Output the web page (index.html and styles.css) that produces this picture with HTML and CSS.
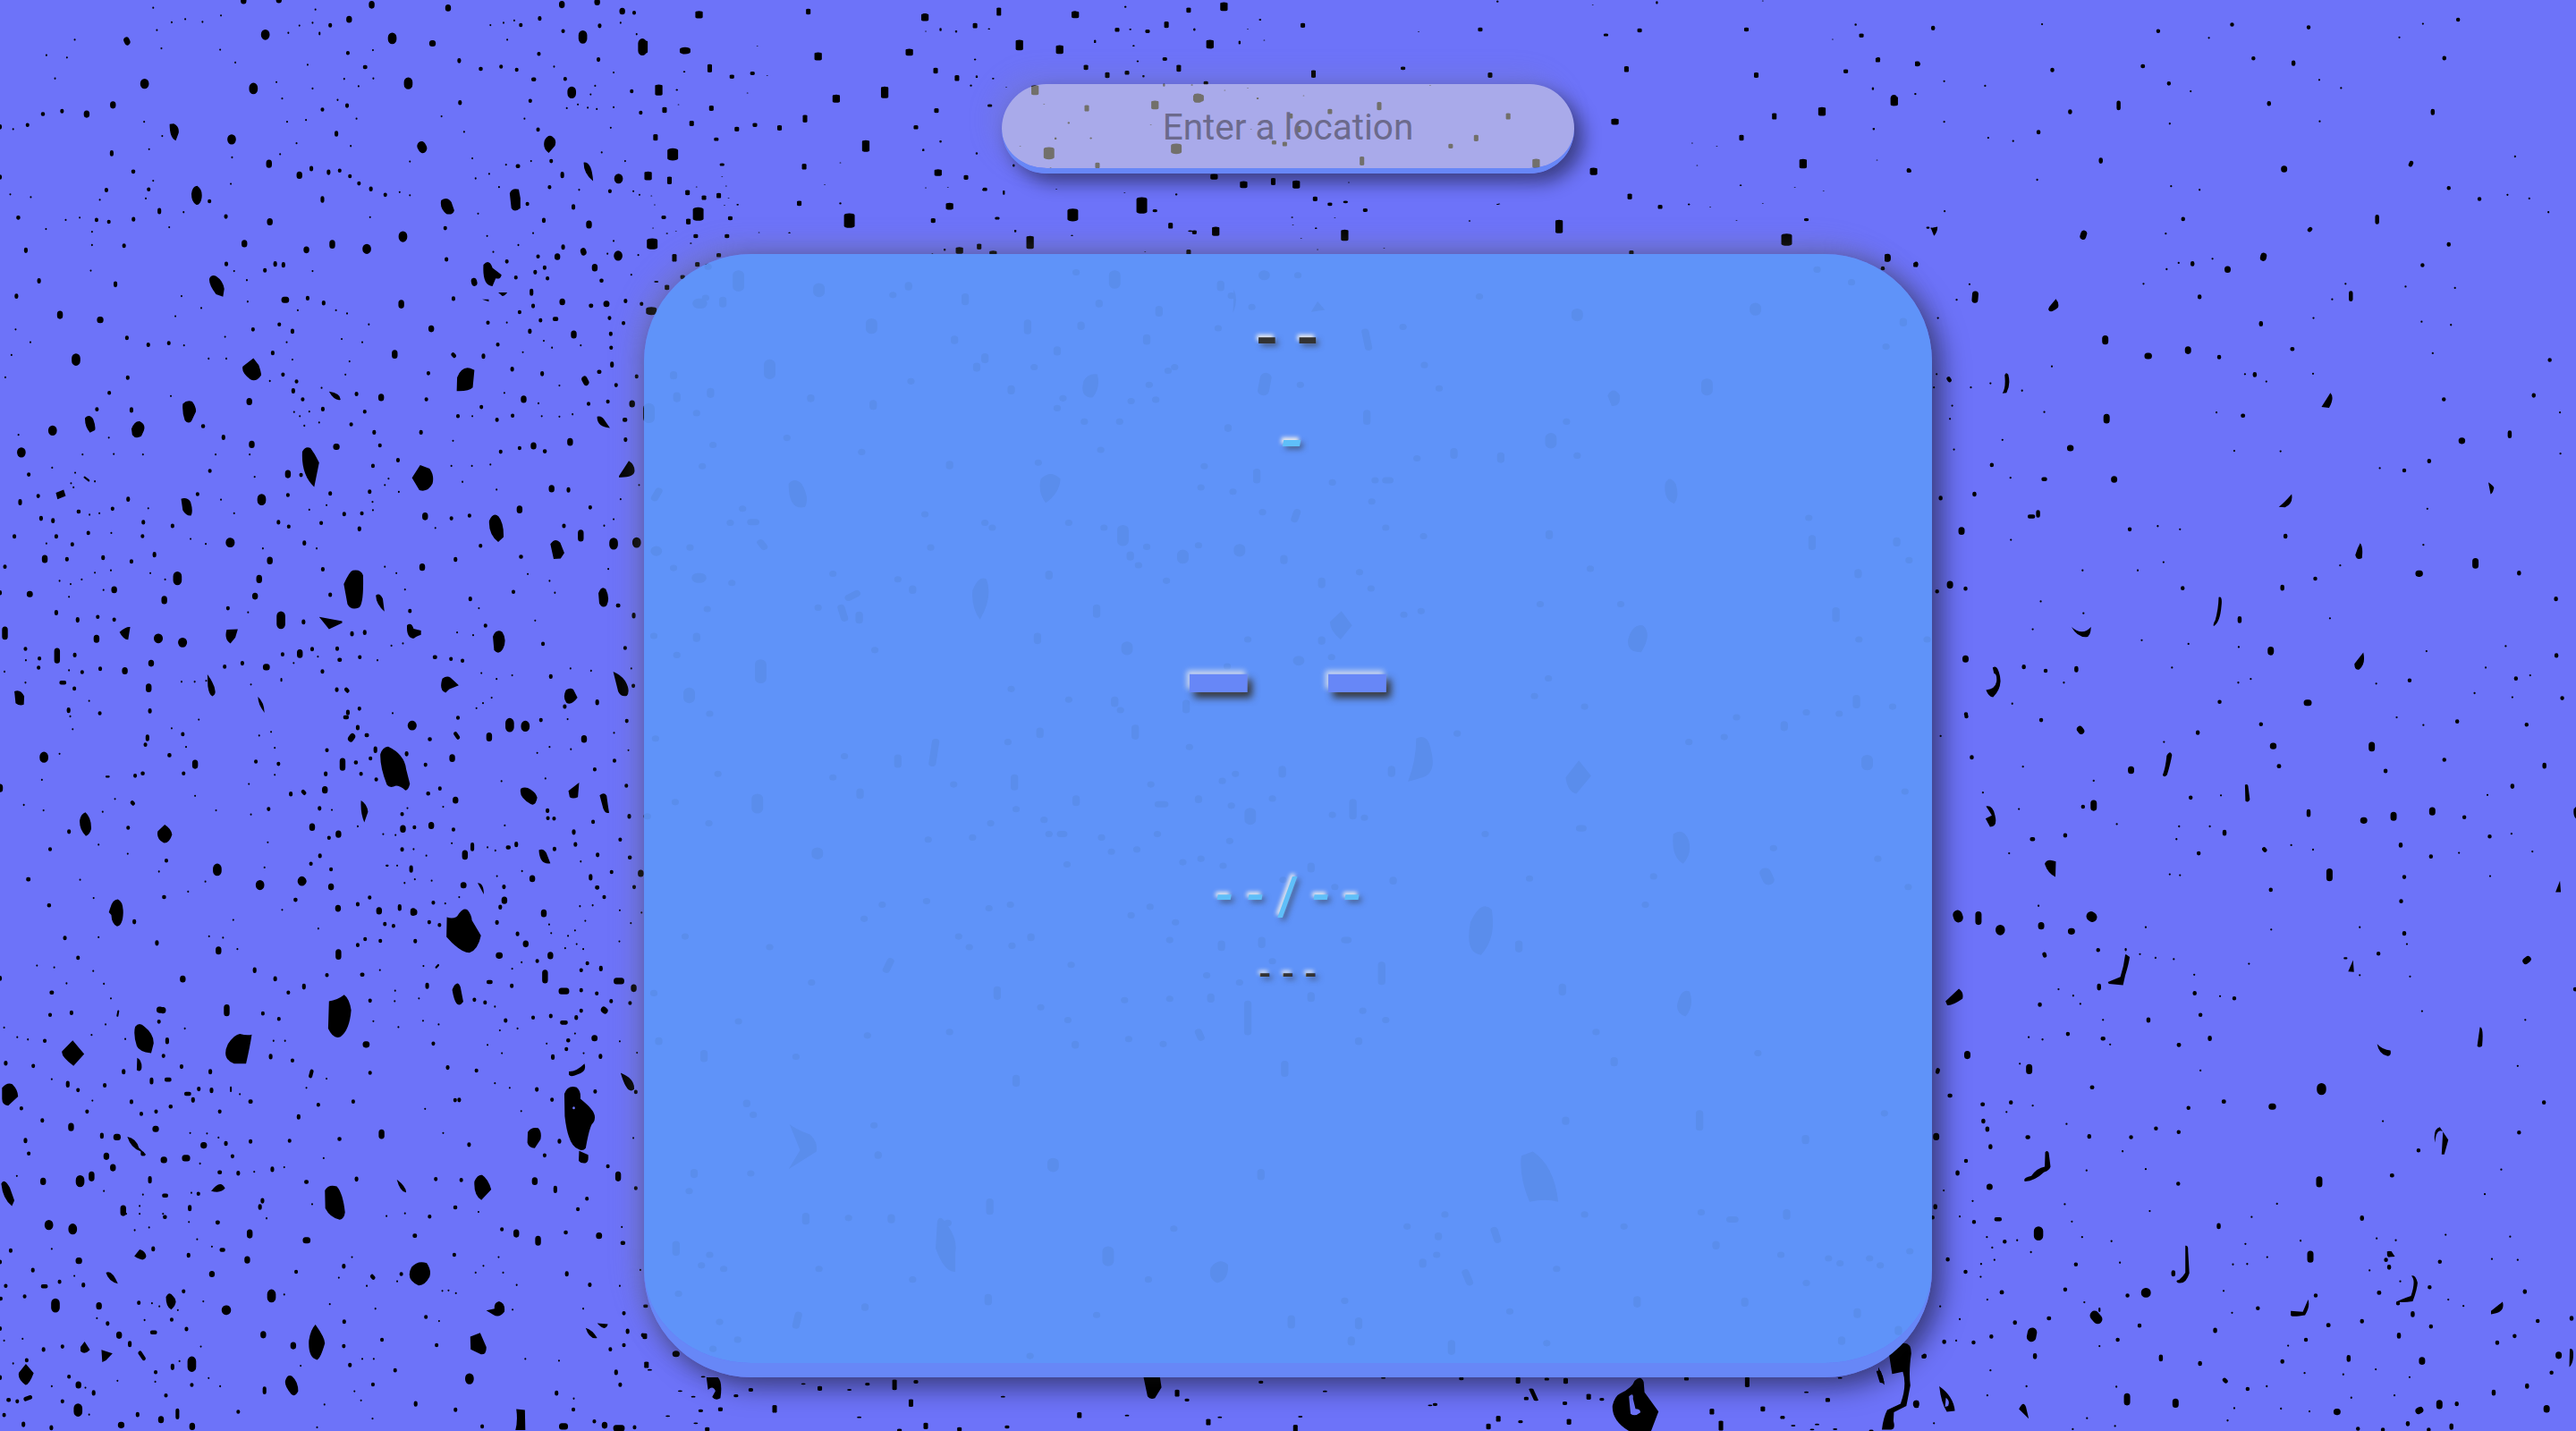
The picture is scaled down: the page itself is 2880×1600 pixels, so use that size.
FILE: index.html
```html
<!DOCTYPE html>
<html lang="en">
<head>
<meta charset="utf-8">
<title>Weather</title>
<link rel="stylesheet" href="styles.css">
</head>
<body>
<svg class="speckle" viewBox="0 0 2880 1600" aria-hidden="true">
<!-- upper left -->
<g transform="scale(.4592 .5102)">
<path class="s1" d="M182 87h0M113 121h0M163 126h0M134 172h0M32 283h0M451 42h0M418 49h0M373 17h0M382 66h0M393 106h0M536 109h0M573 137h0M493 48h0M538 34h0M768 21h0M761 50h0M729 56h0M702 72h0M778 72v3M749 142h0M673 180h0M761 194h0M687 216h0M838 173h0M873 189h0M908 110h0M909 172h0M822 219h0M745 263h0M699 267h0M868 260h0M722 314h0M854 320h0M682 338h0M562 403h0M565 345h0M351 267h0M395 298h0M363 327h0M373 396h0M355 435h0M243 438h0M194 477h0M160 482h0M25 426h0M75 432h0M224 508h0M224 537h0M221 593h0M412 498h0M447 465h0M603 661h0M548 738h0M601 614h0M570 594h0M761 594h0M725 680h0M818 680h0M845 687h0M490 675h0M427 693h0M442 649h0M898 711h0M832 743h0M882 750h0M698 750h0M448 757h0M508 786h0M551 786h0M712 788h0M657 835h0M841 821h0M851 792h0M998 354h0M1075 255h0M998 428h0M973 421h0M901 476h0M1150 347h0M1130 289h0M1194 55h0M1226 50h0M1252 45h0M1235 87h0M1277 260h0M1293 353h0M1232 361h0M1191 381h0M1158 391h0M1215 410h0M1164 468h0M1186 517h0M1201 552h0M1262 537h0M1298 511h0M1349 146h0M1438 207h0M1449 188h0M1407 229h0M1380 237h0M1431 236h0M1453 239h0M1494 159h0M1511 50h0M1550 75h0M1494 235h0M1487 280h0M1465 334h0M1522 353h0M1410 416h0M1542 419h0M1557 427h0M1494 528h0M1479 556h0M1554 559h0M1537 602h0M1234 707h0M1324 747h0M1344 762h0M1414 757h0M1273 772h0M1228 861h0M1362 845h0M1311 884h0M1319 912h0M1362 913h0M1394 908h0M1150 912h0M1103 966h0M1099 1021h0M1149 1021h0M1194 1018h0M1209 1073h0M1126 1056h0M971 1078h0M946 1049h0M937 1063h0M907 1100h0M908 1118h0M1060 1157h0M937 1242h0M965 1256h0M986 1292h0M1166 1333h0M1285 1258h0M1338 1273h0M1351 1299h0M1303 1360h0M1481 1247h0M1471 1152h0M1494 1138h0M1511 1094h0M1556 1063h0M777 926h0M741 933h0M753 902h0M608 996h0M620 1045h0M538 1095h0M570 1125h0M753 1117h0M795 1107h0M771 1202h0M640 1202h0M501 1192h0M464 1181h0M525 996h0M348 996h0M277 995h0M201 996h0M265 959h0M127 1025h0M183 1036h0M206 1046l10 7M231 1055h0M173 1059h0M179 1068h0M242 1125h0M218 1128h0M361 1114h0M271 1168h0M172 1280h0M145 1273h0M199 1270h0M231 1255h0M270 1250h0M252 1293h0M168 1308h0M366 1256h0M402 1270h0M604 1342h0M113 1191h0M28 778h0M74 750h0M38 722h0M45 953h0M13 827h0M416 868h0M783 850h0M716 903h0M730 912h0M112 502h0M63 1447h0M11 1472h0M62 1496h0M168 1469h0M217 1536h0M442 1494h0M474 1494h0M502 1492h0M611 1500h0M685 1488v4M774 1439h0M715 1453h0M919 1447h0M953 1415h0M981 1410h0M1113 1386h0M1152 1392h0M1172 1475h0M1197 1529h0M1209 1488h0M1247 1480h0M1389 1465h0M1439 1470h0M1537 1465h0M1160 1552h0M956 1563h0M1176 1541h0"/>
<path class="s2" d="M67 274h0M104 250h1M151 243v1M0 277v2M0 387v2M272 334v4M324 376h1M259 416v1M362 415h0M388 460v5M325 480v1M265 486h0M235 482h0M44 477h1M302 538v1M63 547v3M95 614v3M40 648v2M281 621v4M309 740v1M361 755v1M411 752h0M311 827v1M266 861h0M236 897h0M320 897v3M494 934h1M544 957v3M511 1032v0M481 1083h0M312 1093v2M274 1115h0M349 1144v1M347 1175h0M420 1152v1M215 1168h0M191 1121h1M100 1135v2M129 1140v2M137 1175v1M176 1193h0M35 1175v1M70 1040h0M93 1087h0M49 1098v5M163 1225v1M251 1221v2M320 1230v1M376 1214v3M12 1242v0M0 1298v2M137 1341v3M189 1357v3M238 1352h0M278 1358h0M62 1422h0M182 1435v1M96 1443h0M94 1463h0M149 1496h8M181 1509h0M200 1473h0M244 1465v1M243 1563h0M365 1557v2M167 1555v3M547 1461h0M590 1453v1M555 1333h0M688 1434h0M739 1362v2M760 1422v1M821 1421v1M876 1440h0M826 1446h2M785 1471v1M820 1511v1M843 1511l3 3M875 1553v0M847 1560v3M857 1388v2M888 1385v2M786 1247v1M804 1303v1M741 1189v2M678 1144v1M703 1154v0M701 1085h0M733 1041h0M804 1081v1M838 1126v1M875 1158v2M881 1125h0M782 1146h0M900 1077v1M908 1021h0M969 1008v1M925 976h0M911 947v1M855 930h0M888 902h0M868 863v1M786 896v1M737 875h0M714 855v3M722 836h0M689 821h0M664 773v1M712 725v2M680 711h0M616 722h0M788 663v2M749 653v1M645 592v1M690 579v3M670 577v3M551 578v1M550 474v1M510 441h0M785 434v6M903 413v2M938 427h0M874 402h0M852 386v0M827 374v0M800 376v3M758 368v3M785 240h0M845 231v1M819 291v4M804 55v1M847 116v0M888 147h2M1118 132v2M1120 224v2M1170 151h1M1220 146h0M1258 153h0M1298 174h3M1291 221h0M1268 55h0M1314 40v1M1371 68h0M1312 118h0M1376 173h0M1457 130v1M1460 56v1M1544 28h0M1538 200h0M1560 247h0M1310 284h0M1342 353h0M1338 410h0M1284 447h0M1260 364h2M1369 381v5M1485 419v0M1396 452v3M1324 482v2M1371 540v3M1310 562h0M1326 586v1M1303 596v1M1333 610h0M1256 608h0M1234 573h0M1087 568v1M1084 500h0M1104 654v1M1188 707h0M1177 779v3M1103 777l3 3M1212 755h0M1290 725v2M1265 684h0M1298 670v1M1294 637v7M1316 702h0M1350 699h5M1464 615h1M1438 670h2M1523 659v1M1562 666h0M1518 708v0M1484 697h0M1487 731v1M1488 762h0M1490 797v4M1458 815h2M1320 818v2M1247 808v2M1172 892h0M1248 911h0M1210 920h0M1115 912h0M1038 875h0M1043 818h0M1025 947v1M1219 990h0M1265 982h0M1326 989h1M1384 1072v3M1373 1152v1M1480 880v0M1433 885h0M1550 825h0M1523 963v1M1500 844h0M1520 920h3M1504 1327h2M1543 1347v4M1522 1420h0M1542 1503h0M1322 1411h0M1250 1297h0M1268 1220h1M1170 1196h0M1109 1225v2M1145 1312v1M1182 1371h0M1058 1440h2M1098 1444h0M1126 1448h0M1143 1130h0M1099 1136h0M998 1339h0M1375 1548v1M1454 1537v4M1341 1482v1M1437 1112h0"/>
<path class="s3" d="M593 0v2M679 0h0M905 9v3M850 42v1M1091 17v1M1515 24v1M1454 4v1M1368 9v2M1052 95h2M308 88l2 4M275 229v2M211 249v2M655 357v4M729 383v2M657 485v2M595 533v2M746 547v1M809 533v5M961 774v5M977 664v5M1050 720v1M1154 616l1 4M1434 490v4M1420 550l1 3M1448 585v3M1357 562v1M1369 661v1M1476 666h1M1397 731v4M1423 831l4 7M1275 874v2M1539 884v2M1388 967v3M1299 976v2M1343 1070v2M1265 1115v3M1035 1130v3M1028 1242v2M928 870v2M818 979h2M613 973v2M607 879v2M701 1037v4M657 1227v3M631 1267v4M621 1306v1M278 1292v1M400 1313v4M368 1453v1M72 1302h1M109 1223v4M139 1427v20M146 688v4M243 701h2M692 657h5M1414 1168v12M647 1462h3M730 1430v5M362 1505v5M235 1398v4M12 1380v15M304 1469v2"/>
<path class="s4" d="M646 75v2M352 183v1M617 192v4M955 82v4M994 180v5M1419 77v8M1564 95v16M1392 200v5M1026 320l3 5M1506 391v1M185 785v6M564 305v1M893 545v1M981 517v3M1505 560v1M128 943v1M52 991v1M432 1263v9M385 1399h1M444 1408h1M560 1189h1M684 1350v18M637 1093v4M1550 1188v2M1494 1189v5"/>
<path d="M413 272l10-1q14 6 12 20l-7 17q-15-5-15-36M466 425q2-17 14-18 14 8 11 27-3 15-13 15-12-6-12-24M510 610q5-9 16-5 17 10 20 28l-3 17-17-5q-19-22-16-35M591 803l26-18 13 15q6 16 6 22-13 17-27 9-22-15-18-28M445 885q10-9 23-5 10 12 9 22l-11 21q-8 7-16-2-7-17-5-36M207 916q11-10 20 3 7 17 4 24l-12 5q-13-14-12-32M320 940q7-18 20-17 16 7 10 21l-6 12q-14 7-22-3zM441 1093q15-4 23 7 7 21 1 30-12 1-20-12zM736 990q7-13 20-8l10 13 11 19-12 53q-32-27-29-77M837 1280q14-28 22-30 20-3 25 11 2 66-11 71-19 6-27-8zM915 1305q9-8 17 7l4 28q-20-15-21-35M777 1352l56 9v4l-32 14zM991 1370q11-7 16 8l18 4v9q-13 4-17 8-19 0-17-29M1074 439q15-9 25 4l7 18q-3 11-19 8-17-12-13-30M1241 424q5-13 22-9l4 19v22q-15 11-22 0zM1326 307q12-18 25-2 5 12-4 19l-11 11q-16-10-10-28M1177 580q14-14 22 7l22 15q-2 11-14 8l-8 17q-25-1-22-47M1113 827q11-25 32-20l10 4-4 38q-9 9-39 8zM1003 1047l20-28 23 8q12 15 7 33-12 20-32 14zM1191 1141q10-20 23-9 13 15 12 45l-13 11q-24-18-22-47M1200 1395q8-18 23-10 12 16 2 36-10 16-22 4zM1340 1192q12-15 24-3l10 23-9 12-17 1zM1457 1300q7-18 18-9 11 20 2 36-11 8-18-5zM1493 1472q19 7 29 20 14 22 4 33-15 3-21-10zM1077 1487q11-7 20-2l20 17-23 8-9 8q-17-5-8-31M1378 1512q10-6 18-1l10 18q-15 18-27 11-10-12-1-28M505 1478q18 22 19 37 1 7-7 11-8-3-11-22zM35 1515q15-6 24 11l-1 18q-10 4-20-3zM1454 913q11-3 19 9l12 16q-33-3-31-25M1507 1043l24-33q15 9 14 23-2 14-38 13M552 1380l27-1-6 18-12 13q-16-9-9-30M291 1385q15-12 26-11l-5 28q-12-1-21-17M801 858q29 4 28 18-15 3-28-18M1421 356q20-2 23 41-23-17-23-41M1174 656h16v5zM1213 641h22q-6 8-12 8zM136 1080l19-7 5 14-20 7zM628 1527q15 12 16 35-16-18-16-35"/>
</g>
<!-- lower left -->
<g transform="translate(0 800) scale(.4592 .5102)">
<path class="s1" d="M171 2h0M177 30h0M418 28h0M453 69h0M145 84h0M259 134h6M280 183h0M250 211h0M58 196h0M106 208h0M102 141h0M240 283h0M311 303h0M195 360h0M387 342h0M228 400h0M458 386h0M500 364h0M240 486h0M90 548h0M132 552h0M162 587h0M253 588h0M227 560h0M270 620h0M644 333h0M687 426h0M568 448h0M509 484h0M543 487h0M578 512h0M775 467h0M652 278h0M611 217h0M526 208h0M606 150h0M669 130h0M669 71h0M660 36h0M631 44h0M484 9h0M475 176h0M808 207h0M871 243h0M933 260h0M963 262h0M992 203h0M1079 200h0M1007 293h0M1038 307h0M941 329h3M967 329h0M985 367h0M1010 359h0M1051 362h0M1084 412h0M1118 398h0M1100 280h0M1187 289h0M1206 296h0M1229 241h0M1271 341h0M1210 352h0M1221 144h0M1308 82h0M1328 138h0M1338 69h0M1382 8h0M1390 74h0M1495 38h0M1530 76h0M1414 320h0M1412 418h0M1443 416h0M1509 427h0M1562 432h0M1536 455h0M1508 495h0M1400 471h0M1425 450h0M1383 483h0M1376 510h0M1404 501h0M1420 512h0M1342 477h0M1337 458h0M1270 541h0M1247 555h0M1062 552l5-5M1031 549h0M925 558h0M961 626h0M1020 620h0M962 603h0M1030 669h0M1068 677h0M909 670h0M970 683h0M1187 722h0M1217 690h0M1260 686h0M1205 638h0M1222 740h0M1331 719h0M1400 697h0M1421 740h0M1509 714h0M1551 739h0M1205 806h0M1269 867h0M1241 816h0M1035 862h0M1079 915h0M941 1097h0M986 1091h0M1165 1088h0M1177 1206h0M1158 1221h0M1225 1221h0M1214 1187h0M1258 1248h0M1248 1302h0M1110 1266h0M1092 1260h0M1077 1261h0M967 1240h0M914 1300h0M825 1232h0M857 1187h0M893 1250h0M692 1269h0M803 1290h0M732 1425h0M790 1510h0M879 1501h0M907 1541h0M882 1410h0M910 1410h0M863 1481h0M772 1560h0M1069 1327h0M1279 1410h0M1361 1414h0M1397 1497h0M1420 1300h0M1509 1250h0M1559 1215h0M1514 1121h0M1542 926h0M649 1102h0M760 1071h0M692 990h0M619 1000h0M788 970h0M795 796h0M746 816h0M666 713h0M694 713h0M562 815v8M584 830h0M463 915h0M504 916h0M532 925h0M487 982h0M466 1046h0M348 1050h0M340 1075h0M340 1092h0M397 1092h0M363 1122h0M328 1128h0M307 1092h0M253 1042h0M41 1009h0M126 797h0M42 705h0M10 684h0M68 710h0M223 700h0M257 677h0M305 709h0M288 648l-2 10M450 686h0M225 844h0M516 1164h0M480 1148h0M460 1110h0M495 1284h0M433 1303h0M489 1383h0M437 1415h0M536 1470h0M508 1452h0M378 1460h0M286 1458h0M208 1473h0M217 1532h0M126 1470h0M55 1366h0M32 1420h0M10 1370h0M181 1228h0M126 1169h0M236 1321h0M352 1325h0M388 1295h0M370 1288h0"/>
<path class="s2" d="M359 46v6M354 64h0M412 87h1M347 127h1M322 191l2 2M312 246h0M168 254v1M122 293h0M405 318h0M68 359h2M119 416h1M399 398h1M158 487v1M190 531h0M327 451v2M382 497v3M445 41h0M447 127h0M329 132h0M122 656h0M174 651v1M125 607h2M109 713h0M81 768h0M14 761v2M165 805v6M190 821h0M255 810v1M301 779v3M407 710v6M369 798v6M405 798h8M442 769v1M398 746h0M387 671h0M320 846v1M344 873h0M380 868h0M415 857h1M484 818v1M515 820v3M512 779v3M535 868h0M453 829h8M470 841v3M52 861h0M103 887v1M62 930v3M70 960h0M248 919v4M212 868h0M347 960v1M365 1014v7M405 1052h-6M483 1048h0M462 1077v5M401 1099h1M373 1168v2M459 1182v2M539 1171h5M529 1111h2M534 1001h2M580 1002v2M566 966h0M550 937v2M610 933v1M663 993v3M705 932h0M659 746v3M712 756v0M759 780l-3 10M775 853h0M727 878v3M609 846h2M640 653h0M679 665h0M620 556v4M670 576v2M702 607h0M740 592v4M796 569h0M881 568h2M901 625h0M871 503h0M889 490h0M926 494h0M937 457h0M958 461h0M900 399h0M871 413v1M806 337h0M779 307v1M757 325h0M801 268h0M719 404h1M708 171v2M738 167l3 3M654 205h0M678 106h0M623 101h0M778 203v1M793 127v2M796 76h0M866 103h1M879 128h0M871 25v3M840 4h5M892 43h2M902 94h0M914 72v6M916 140h0M990 83v2M1042 171h1M1071 160h0M1036 108h0M1046 52h1M1109 40l6 8M1115 5h0M1317 10h0M1526 12h0M1496 99h0M1448 118h0M1525 154h0M1532 220v2M1510 272h0M1444 233h0M1397 254v3M1401 282v1M1455 305v1M1533 311h1M1489 343h0M1350 292v1M1333 208v1M1349 226h0M1334 225h0M1471 398h0M1544 376h0M1438 352v5M1453 377h2M1257 281v3M1236 289h3M1150 283v10M1104 250h0M1009 245h0M979 293v1M979 216h0M1001 333v7M973 418v6M1011 494v1M1055 410h0M1045 453h0M1070 459h0M1040 590v5M1155 623h0M1181 629h0M1189 584h6M1246 592v1M1227 375v1M1218 419v2M1210 453v1M1260 478v1M1308 538h0M1430 543h0M1415 558h0M1463 553v3M1415 602h0M1488 626h0M1453 609h0M1534 630h0M1415 647h0M1403 661v2M1341 658v1M1298 662h0M1231 668v1M1368 673h10M1383 712h1M1379 731h0M1346 747v3M1462 746v2M1548 825h0M1449 824h0M1307 819v1M1344 842h0M1118 842v1M1108 843h0M1090 771v1M1160 778h0M1055 719h0M901 783h0M860 846h0M826 928h1M868 1015v2M745 1022h2M633 1075v4M639 1062v3M721 1219h0M906 1229l3 3M837 1206v2M977 1224h0M1106 1182h0M1009 1140h2M1046 1098h0M1061 1016h0M1108 1078h1M1123 1018h0M1142 940v1M1352 1035v7M1326 964h0M1362 932v2M1480 988h0M1429 1059h0M1407 1082h0M1222 1126h0M1377 1133h1M1548 1036h0M1515 1156h3M1380 1222v3M1436 1247v1M1519 1310h0M1528 1348v3M1519 1380h0M1486 1389h0M1565 1358h0M1500 1438v3M1510 1466v1M1355 1484v2M1396 1521h0M1109 1521v1M1012 1507v3M962 1435h0M930 1368h0M1037 1318h0M1063 1380h0M837 1382h0M838 1328v1M852 1423v1M908 1466h0M644 1475v8M580 1526h0M404 1490h0M379 1439h0M420 1425v5M454 1344v1M418 1324h0M370 1352h8M447 1262h0M338 1287h0M262 1332v1M316 1375v5M341 1397l9 12M203 1247v2M145 1241h0M80 1215v1M26 1172v1M14 1250h0M60 1273h0M104 1251h8M2 1278h0M0 1343v1M106 1389v1M152 1383v0M65 1413h0M168 1449h0M20 1500h2M42 1503h0M62 1498l12-4M152 1503h0M10 1533h0M57 1552v3M125 1560v2M0 1197v1M228 1483v3M335 1531v2M432 1523v15M467 1467h0M1447 1547h0M1545 1560h0M1174 1558h0M0 575v2M0 1450v2"/>
<path class="s3" d="M475 104v6M0 157v4M445 577v1M388 645h2M552 640v12M532 513v4M396 646h1M378 906h2M495 942h2M398 974h2M283 924h4M259 965v2M275 990v2M223 1006v8M105 1020v2M173 900v4M300 1080v10M191 1195h2M241 1293v2M290 1357v2M191 1466v2M392 1542v2M294 1555h2M468 1557v2M516 1224h0M608 1133v6M602 1192v2M641 1356v2M714 1380v2M744 1150h5M890 721h3M929 914v7M824 519v9M823 422v1M806 375v1M735 363h4M760 243v3M824 259v2M791 162v2M858 46l-4 5M834 100v14M923 427v2M1006 429v3M1007 431h2M981 247v3M1050 240v2M1132 302v7M1109 185v1M1101 92v3M1191 44v6M1422 50v3M1296 357v1M1228 404v2M1324 432v3M1214 526h3M1280 500v1M1340 525v2M1128 372h1M1447 707h1M1501 582h12M1367 604h12M1327 564v16M1543 596v3M1470 645l3 2M1505 1006v8M1302 1019v3M1257 1133v4M1310 1147v8M1458 1140h1M1420 968v3M1560 345v2M450 970h6M1472 1555v1M1368 1558h8M1500 1562h14"/>
<path class="s4" d="M107 90v3M529 335v6M633 371v1M735 363h0M1003 22h1M1241 16v10M1279 22v3M195 1018v5M119 1116v1M177 1124v3M135 1288v10M467 1415v13M661 1268v8M550 1303h2M190 1518v8M1143 1452v3"/>
<path d="M194 230q3-15 14-18 15 12 14 37-4 13-13 15-16-14-15-34M384 254l17-15q16 9 18 22-7 20-21 18-18-9-14-25M268 423q6-20 19-20 13 5 13 29-1 28-15 30-13-5-14-25l-6-6zM926 85q5-16 19-17 40 17 44 50l9 32q-4 14-11 14-13-10-23-10-15 6-22-2-17-39-16-67M1088 442q15 5 25-2 15-22 26-13 9 10 10 22l22 33q-7 31-28 38-22 0-56-35zM801 626q20-2 37-14 13 9 17 34-4 44-26 58-17 7-30-18zM555 720q16-21 29-22 19 4 29 1-4 25-14 64h-29q-32-11-15-43M151 736l26-24 28 30-26 26q-31-21-28-32M329 682q10-12 23 0 23 16 22 37l-6 21q-30-4-35-16-9-25-4-42M5 816q12-13 25-8 14 13 14 27l-24 20q-15-1-15-15M3 1026q7-14 21 9l11 28-6 12q-22-15-26-49M791 1041q9-15 29-9 15 15 20 57-2 15-13 16-24-5-35-25zM1002 1209q15-16 37-9 12 16 7 30-12 20-27 19-33-13-17-40M1155 1021q8-16 19-14 15 9 22 32l-24 23q-19-11-17-41M1285 913q8-12 25-9 10 8 6 25l-14 19q-15 0-18-12zM1374 829q8-20 30-14 11 8 9 25 20 15 25 21 17 17 6 32-8 4-18 55-7 8-18 2-25-7-33-72zM1410 954l22 9q2 16-7 18-11 1-16-5zM1268 160q12-5 24 2 13 7 16 18-4 20-16 14-30-15-24-34M1384 165l26-18-3 32q-12 5-20 0zM1460 175q11-8 17 1 3 21 6 37-12 4-17-18zM1312 295q11-5 18 6l10 23q-26 4-28-29M1184 1304l20-4q-2-13 11-16 16 4 13 23-13 15-27 6zM1145 1361l24-8 15 31q1 17-13 16l-25-11zM752 1370q4-24 16-35 23 29 23 41-11 34-19 36-22-4-20-42M46 1440l17-19 19 20q-11 26-20 26-20-13-16-27M695 1457q5-14 16-9 15 12 15 33-8 14-17 6-18-19-14-30M327 1185l13-15q14 3 16 15-4 15-29 0M514 1042q23-27 34-6-10 12-34 6M258 1221q14-8 29 24-23-5-29-24M310 923q22 4 28 24 5 4 17 15-5 9-13-7-23-7-32-32M404 1274q8-14 17-2 16 13-4 30-13-5-13-28M247 1390l27 8-16 15-9 4zM196 1384l10-12 13 18q-13 12-23 3M1101 601q12-25 20-6l7 32q-18 22-27-26M1385 780q18 1 38-17 7 18-18 24-16 7-20 0M1511 783q35 13 33 36-17 14-33-36M1257 1520l21 2 1 44h-24q6-20 2-46M879 186q15 8 17 25l-9 23q-10-20-8-48M1163 367q15 0 15 25zM1426 1342q16 4 28 22-19 4-28-22M1454 1332l26 2q-6 18-26-2M966 1017q22 15 23 28-14 1-23-28M334 750q11 4 11 21-1 12-12 6z"/>
<circle class="hole" cx="1397" cy="860" r="3"/>
</g>
<!-- top middle -->
<g class="narrow" transform="translate(720 0) scale(.9184 .3333)">
<path class="s1" d="M361 95v8M380 103v5M343 105h0M420 96v2M549 135v8M596 152v3M592 97v3M670 96v6M586 21v4M750 64v4M735 98h0M943 107h0M1039 3v4M1155 16h0M1233 5v7M1362 3h0M1475 80v5M1447 132h0M1496 294v7M1548 315h0M1497 430v5M1276 480h0M1282 555h0M1306 491h0M1335 620v3M1401 629h0M1436 640h0M1272 684v3M1298 695h0M1362 682h0M1005 740v2M1041 684l-2 2M1501 537h0M1541 568v7M1330 740h0M1567 765h0M858 612h0M707 303h0M747 328v4M803 321h0M633 282v7M667 284v2M735 295h0M517 410v4M501 462v5M544 462v3M487 350h0M450 552v6M441 292h0M425 262v3M398 285v4M405 254v6M403 198v3M438 640v12M413 636v2M405 512v5M340 500v6M361 472v5M239 546h0M220 619h0M126 312h0M138 154h0M150 254h0M42 351h0M40 300v3M49 239v3M95 592h0M103 665h0M98 688h0M114 685v3M64 627h0M100 624h0M9 657h0M13 687h0M28 782v2M39 775h0M57 815v2M177 780v2M140 780h0M239 680v4M343 630h0M370 628h0M366 835v5M351 850h0M502 634h0M585 647h0M648 650v4M521 789v2M789 728v2M790 755h0M818 764v3M841 730h0M800 800h0M820 837h0M901 833h0M725 138v9M755 135h0M957 287h0M617 419h0M739 433h0M608 253v5M601 204v3M458 490h0M495 562h0M610 845h0M452 772v6M11 765h0"/>
<path class="s2" d="M80 218v22M403 80v12M381 255v14M355 230v14M356 366v10M132 243v6M107 253v8M58 408v12M25 362v14M82 357v12M14 453v16M113 428v10M135 415v8M95 550v4M195 552v14M392 590v10M415 632v6M189 676v12M352 735v10M24 726v6M54 736v14M53 640v12M73 658v10M91 650v12M105 728v8M63 788v8M101 788v8M31 595v20M421 352v4M196 388v20M165 423v12M331 423v8M88 464v6M539 355v16M552 548v14M576 96v8M613 102v6M636 75v16M663 28v12M802 80v10M634 195v6M588 240v8M564 245v14M538 220v12M690 140v20M651 220v18M684 275v6M780 478v10M767 474v8M757 405v4M895 345v22M1013 455v16M982 485v10M1052 382v16M874 528v24M835 368v12M787 383v12M797 425v16M1018 95v8M1030 246v12M924 226v6M815 238v20M1171 115v4M1212 98v8M1342 95v8M1482 115v8M1196 225v14M1354 246v12M1463 235v8M1502 196v10M1550 208v12M1376 382v16M1336 455v14M1200 652v14M1237 690v8M1415 735v4M1202 843v8M766 600v18M817 662v10M835 682v6M854 676v3M878 702v6M641 750v14M622 705v4M663 840v12M408 820v14M91 852v8M37 855v20M28 958v12M47 925v8M65 882v10M15 945h0M670 775v8M665 775h0M1513 855v20M1548 883v10M1508 902h0M430 730v4M1540 572v4M342 48v16M524 40v16M432 28v22M200 32v14"/>
<path class="s3" d="M67 41v16M212 180v18M323 168v14M506 156v20M457 138v26M689 138v20M706 12v20M342 50v16M525 42v14M234 322v18M293 295v30M18 288v28M270 475v30M358 572v14M372 685v14M622 342v20M730 612v14M794 610v18M694 588v10M696 765v22M1182 402v12M1156 567v16M1434 364v20M1411 538v22M1522 328v22M1114 742v36M476 290v24M1086 537v22M674 318v22M0 140v34M384 833v14M425 845v6M470 796v34M5 580v20M853 775v28"/>
<path class="s4" d="M675 322v14M648 488v22M493 500v28M35 504v28M66 702v32M250 722v36M522 706v30M606 668v42M1391 790v28M10 806v24M9 1036v14M50 165v10"/>
</g>
<!-- seen through the card -->
<g transform="translate(720 284) scale(.9184 .7908)">
<path class="s2" d="M78 18h0M75 62h0M96 65v6M322 44v3M303 58h0M391 60v8M467 97v12M378 120v3M415 145v5M503 135v4M526 26h0M554 69v2M532 100v3M627 78v6M612 118v6M646 160h0M702 42v6M715 59h0M699 105h0M740 75h0M796 30h0M878 110l4 22M950 157h0M924 103h0M1017 60h0M1428 22h0M1470 40h0M1533 95v3M1512 131h0M36 170v3M40 200v5M81 194v5M64 225h0M203 203v2M279 211v5M325 180h0M405 158v4M447 190v4M475 160h0M510 204h0M503 218h0M536 237h0M579 237h0M593 208h0M615 185h0M623 206h0M638 165h0M711 245v2M799 185h0M880 225v12M968 190h0M1123 237h0M1136 285h0M986 279v6M941 289h0M1043 285v6M838 323h0M903 320h5M890 320h0M886 350h0M746 308v12M717 336h0M682 300h0M678 330h0M556 277h0M480 295h0M372 297v3M265 280h0M174 260h0M84 270h0M71 300h0M18 335l-5 10M120 360h0M105 380h0M130 379h6M142 408l4 6M56 415h0M36 444h0M107 465h0M77 502h0M64 540v4M12 540h0M40 567h0M230 452h0M309 460h0M327 473v3M259 480l-10 6M240 500l4 15M262 510v8M212 500h0M281 560h0M349 415h0M342 368h0M415 380h0M424 387h0M517 380h0M560 387h0M493 452v4M551 500v10M592 425v4M612 414h0M602 440h0M636 462h0M675 412h0M779 430v4M753 365h0M795 365l-3 10M825 462v6M871 450h0M885 473h0M903 387h0M949 399h0M925 510h0M946 505h0M1102 395v4M1091 495h0M1152 445h0M1189 495h0M1418 373h0M1422 402v12M1478 450v4M1451 504v12M1479 545h0M1525 405v4M1540 433h0M1562 545h0M1520 640h0M1476 628v10M1455 650h0M1415 648h0M1388 665v5M1330 655h0M1315 683h0M1272 690h0M1145 640h0M1101 600h0M1084 625h0M479 540v7M447 615h0M517 630h0M573 630v6M580 645h0M660 635v10M710 583h0M735 545h0M825 545v3M837 570h0M990 678h0M910 728v7M863 775v20M838 793h0M877 797h0M777 728v8M765 770h0M720 735h0M704 745h0M675 770v2M715 780h0M626 778h8M664 697h0M617 750h0M598 670v12M482 674v6M451 740v14M443 690h0M377 750h0M355 690l-4 30M309 712v10M263 760v6M244 710h0M230 740h0M80 650h0M90 735h0M14 685h0M38 775h0M4 795h0M79 805h0M346 828h0M400 825h0M422 805h0M453 785h0M526 770v6M487 800h0M507 820h4M493 820h0M557 825h0M515 863h0M569 845h0M600 842h0M625 820h0M656 860h0M678 855h0M705 865h0M713 830h0M778 885h0M812 865v5M841 895h0M853 970h4M912 885v2M1024 820h0M1078 883h0M1139 812h4M1065 975v8M1219 920h0M1229 880h0M1375 840h0M1502 855h0M1539 895h0M1535 760h0M290 920h0M268 940h0M344 915h0M420 925h0M446 920h0M471 965v2M448 978h0M396 980h0M383 965h0M520 1005h0M593 935h0M616 923h0M647 945h0M640 970h0M703 975v6M752 970v7M765 1000h0M812 1048v5M725 1030h0M690 1050v4M685 1020h0M585 1055h0M640 1053h0M430 1040v10M372 1100h0M272 1105h0M300 1000l-5 12M204 1030h0M153 980h0M50 965h0M12 1045h0M18 1112v2M73 1130v8M115 1085h0M185 1135h0M125 1200v2M133 1217h0M280 1232h0M285 1273v2M61 1298v4M55 1325h0M130 1300h0M197 1360v8M249 1363h0M301 1362v4M421 1340v14M370 1370h0M453 1165v8M483 1065h0M516 1083h0M525 1117v2M590 1110h0M632 1117h0M675 1100l3 8M735 1060v40M780 1145v14M870 1112v2M875 1070h0M903 1083h0M898 1005v24M1118 1036v8M1159 1100h0M1181 1140v4M1122 1224v3M1285 1215v20M1356 1130h0M1414 1250v4M1510 1215h0M1391 1355v6M1322 1365h6M1287 1355h0M1305 1400v3M1340 1480v4M1384 1415h0M1415 1455h0M1442 1420h0M1456 1427h0M1492 1420h0M1505 1430h0M1541 1410h0M1477 1495v5M1527 1520v4M1458 1535v3M1209 1478v7M1145 1358h0M1193 1375h0M1111 1435h0M1035 1380l4 14M1000 1440l5 14M975 1358h0M967 1388v2M965 1415h0M929 1375h0M948 1425v4M853 1480h0M870 1508v8M861 1535v4M788 1505v10M751 1298v7M645 1378h0M614 1450h0M551 1500h0M419 1475v7M327 1450h0M269 1488v2M188 1500l-3 15M213 1435h0M80 1415h0M39 1400v12M70 1430h0M97 1435h0M42 1470h0M92 1510h0M114 1535h0M84 1548h0M39 1555h0M470 1558h0M983 1540v12M1054 1495h0M1099 1540h0"/>
<path class="s3" d="M66 70h4M115 30v16M213 48v6M277 98v8M153 156v14M6 218v14M573 30v12M1136 84v4M1353 76v4M1294 183v10M1104 260v8M757 175l-3 18M755 30h0M15 420h0M65 458h4M583 390v16M656 425v6M725 417v4M588 555v5M142 580v20M55 620v8M138 770v14M211 846v3M738 790v10M797 575h0M1489 715v8M565 1410v14M498 1285v6M1365 875l4 10"/>
<path d="M483 318q12-14 24 0-1 20-18 34-10-15-6-34M176 325q7-10 16 0 10 20 4 33-20 5-20-33M535 180q5-12 17-10 4 20-6 33-16 0-11-23M718 50q6 15-1 33zM820 67l9 12-17 3zM1243 325q5-14 13 0 5 18-2 28-13-5-11-28M1173 200q7-14 15 0 1 16-10 15zM400 475q8-22 17-15 8 25-8 57-11-17-9-42M1198 545q5-22 18-20 12 12-2 38-18 0-16-18M835 520l14-15 13 20-14 20q-13-12-13-25M1122 740l16-24 15 22-18 25q-11-3-13-23M940 685q14-8 18 16 8 35-13 40l-15 5q10-30 10-61M1253 820q13-10 19 10 4 18-7 32-15-10-12-42M1006 945q13-33 26-18 6 40-13 64-20-2-13-46M1258 1060q5-23 15-17 6 20-5 35-12-4-10-18M1068 1275l14-6q26 20 31 71-15-5-35 0-13-35-10-65M177 1230q5 6 25 15 10 10 8 24l-34 25 14-27zM357 1368q3-13 13 6 12 20 9 38v27q-13 2-24-33zM690 1433q10-15 21-4 1 22-13 26-12-6-8-22"/>
</g>
<!-- upper right -->
<g transform="translate(2100 0) scale(.49745 .5102)">
<path class="s1" d="M368 53h0M743 83h0M1171 82h0M1224 52h0M240 188h0M148 178h0M83 206h0M148 267h0M247 302h0M303 309h0M357 394h0M149 463h0M205 623h0M176 657h0M134 697h0M390 803h0M131 820h0M125 849h0M208 849h0M252 840h0M166 889h0M161 918h0M170 985h0M279 964h0M373 903h0M323 856h0M297 1047h0M298 1183h0M459 1250h0M583 1250h0M641 1232h0M628 1153h0M678 1160h0M365 1318h0M347 1379h0M461 1344h0M592 1403h0M660 1463h0M697 1411h0M810 1418h0M837 1488h0M809 1496h0M417 1496h0M301 1542h0M1015 1355h0M1038 1239h0M1119 1498h0M1232 1427h0M1365 1463h0M1410 1416h0M1340 1519h0M1425 1528h0M1465 1480h0M1225 1194h0M1234 1115h0M1127 1026h0M904 989h0M800 988h0M760 904h0M872 836h0M824 820h0M977 819h0M978 697h0M1020 656h0M1050 622h0M1185 628h0M1221 705h0M1287 712h0M1296 631h0M1246 774h0M1533 994h0M1532 904h0M1506 465h0M1463 435h0M1431 343h0M1414 427h0M1040 193h0M992 266h0M991 175h0M655 271h0M702 200h0M658 408h0M722 416h0M646 512h0M648 590h0M675 576h0M751 567h0M596 622h0M110 499h3"/>
<path class="s2" d="M123 61v1M88 140h2M391 153v1M431 244v2M360 289v1M500 350v4M594 145h1M653 183h0M629 68h0M795 54h0M967 60h0M1303 43h0M843 128h0M1272 127v1M933 137v3M878 226v2M1246 243v5M540 225v12M68 373h0M10 588h0M85 578v2M158 830l2 3M255 1019h0M216 1082v2M140 1091v1M371 1050h4M340 1132h8M359 1122v8M196 1290h0M132 1296h0M327 1461v1M376 1470h0M445 1464v5M197 1565h0M565 1160h0M684 1289h0M767 1538h0M812 1355v6M908 1286v4M982 1268h0M915 1174v2M819 911h1M846 820v2M766 782v1M722 650v1M706 577v2M685 480h0M860 708v3M930 765h1M971 502l-2 2M1198 357l-2 4M1282 412h0M1351 436h0M1282 535v1M1223 581h0M1271 875h0M1238 1010v1M1182 1031h0M1419 948v8M1473 866v1M1509 789h0M1523 1312v1M1524 1436v1M1537 1530h0M1433 1487h0M1194 1491h0M1440 1255v2M1062 642v14M1121 475v12M0 130h0"/>
<path class="s3" d="M35 215v10M21 563v4M510 742v6M605 780h3M696 766v3M513 914v7M431 982h1M530 1050v1M462 512l-2 6M785 590v1M912 370v1M187 1162v3M161 1280v3M196 1443v2M1311 966h1M1342 1230v9M218 645l-1 12M866 561l-1 4M882 1424v5M963 1540h4M1214 1257h3"/>
<path d="M118 500l15-3q0 12-8 20zM384 673l15-18q8 9 5 19-18 15-22 4zM284 822q3-8 8-1 6 22-4 40l-9 1q8-12 5-40M996 892l20-31q10 10-3 33zM900 1111q12-9 29-28 4 20-15 29zM1371 1057q16 11 12 14-2 10-7 12zM1072 1216q5-16 11-26 7 8 4 33-12 6-15-7M765 1309q9-4 6 20-3 35-17 43-3-3 3-12 7-23 8-51M434 1374q25 21 44 0-1 23-12 22-19 0-32-22M257 1463q9-7 14 10 11 31-13 55-10-1-16-16 23-2 24-22 0-14-6-14zM1070 1455l20-25q6 25-9 37-11 3-11-12"/>
</g>
<!-- lower right -->
<g transform="translate(2100 800) scale(.49745 .5102)">
<path class="s1" d="M140 45h0M325 112h0M235 169h0M484 143h0M316 205h0M294 302h0M536 238h0M642 58h0M770 175h0M676 243h0M670 271h0M745 243h0M655 348h0M678 350h0M928 284h0M977 294h0M1165 4h0M1225 21h0M1369 174h0M1423 259h0M1305 301h0M1375 352h0M1470 298h0M360 417h0M601 464h0M556 512v2M588 523h0M623 531h0M664 534h0M710 568h0M768 615h0M833 544h0M883 469h0M1048 532h4M1082 569h0M1082 464h0M1188 501h0M1195 572h0M1222 648h0M1454 667h0M1437 768h0M1134 889h0M1363 1049h0M1400 995h0M1275 1138h0M1420 1142h0M1120 1146h0M1163 1150h0M1173 1240h0M1281 1280h0M1315 1294h0M1379 1191h0M1437 1193h0M1104 1216h0M949 1151h0M825 1158h0M797 1203h0M829 1202h0M776 1261h0M795 1309h0M874 1187h0M896 1070h0M839 1099h0M610 1086h0M601 994h0M549 955h0M468 997h0M423 895h0M347 855h0M288 869h0M338 705h0M369 710h0M318 763h0M405 600h0M438 614h0M454 632h0M505 667h0M521 721h0M724 778h0M147 1041h0M212 1064h0M183 1098h0M244 1143h0M256 1166h0M312 1150h0M343 1176h0M231 1202h0M230 1230h0M261 1193h0M245 1280h0M139 1295h0M183 1323h0M175 1370h0M252 1435h0M245 1490h0M333 1470h0M419 1071h0M435 1109h0M458 1143h0M524 1152h0M543 1199h0M463 1286h0M497 1300v5M497 1382h0M535 1471h0M469 1540h0M437 1564h0M532 1557h0M785 1545h0M800 1518h0M873 1470h0M905 1519h0M958 1441h0M969 1525h0M1045 1444h0M1063 1495h0M1118 1433h0M1194 1450h0M921 1381h0M1160 1490h0M125 1551h0"/>
<path class="s2" d="M198 2h0M366 10h0M210 91v1M420 262v1M460 200h0M345 271h3M718 37v1M702 180h0M720 302h0M860 19h0M1301 13h0M1457 20h0M1272 97h0M1140 121v1M900 111h1M778 255v4M867 293l2 2M882 382h0M1174 283v2M1182 354h0M1242 309h0M1374 265h0M1425 154v2M1497 108v4M1175 407h0M1182 477v1M1124 522h0M967 210v8M711 608v1M724 656h0M800 620h0M745 706v3M675 722h1M607 666v3M494 514h0M496 592v6M373 523l1 3M363 633v1M426 698h0M504 708h2M480 815h1M160 833h2M134 777l-1 4M234 852h1M236 888v2M245 905v3M252 944v2M298 848h0M335 924h2M197 976h0M178 1001v3M128 1075v3M122 1100h0M215 1110h0M265 1104h8M156 1192h0M196 1219h0M284 1153h0M277 1264h1M307 1330v1M383 1321h1M444 1203h0M420 1258h0M474 922v1M568 924h0M624 905h0M675 913h0M697 860h0M776 846h1M674 1026h0M765 1117v4M560 1271h0M587 1337h0M757 1346v3M853 1299h0M983 1271h0M1011 1336h1M1087 1327v1M1125 1265h1M1168 1288h0M1201 1310v4M1239 1253h0M1262 1197h0M1242 1339h0M1170 1357v4M1148 1178v4M1148 1208v2M1141 1193h0M1154 1008h1M1214 953h0M1440 914h0M1496 848h0M1453 1262v1M1482 1327h0M1430 1360h0M1391 1374v1M1513 1440h0M1458 1468v3M1383 1482v4M1558 1320v2M1300 1508v1M1190 1551v2M1237 1565h0M1288 1556v5M1078 1563h0M1134 1565h0M1057 1406v6M961 1368h0M908 1415v1M830 1476h0M778 1456l3 3M723 1419v2M635 1405v6M538 1368h0M352 1402v4M254 1361h0M214 1374h0M148 1372v1M104 1403v1M663 1220v5M1317 223h0M1087 1100v3M1566 600h0"/>
<path class="s3" d="M453 30l3 4M484 192v10M568 118v3M887 67h1M1109 65v7M1090 230h2M1158 218v6M1245 208v4M1014 342v14M366 460v2M433 473h2M200 742v4M339 771v8M130 922v2M250 1033h0M884 857h3M991 1017v10M971 1180v12M1222 1413v3M1030 1526h2M559 1492v13M668 1504v6M85 1508v1M1529 1401v2M1502 1518v3M1261 1507v6M1214 1524l4-2M1455 538l5-4M225 436v16"/>
<path class="s4" d="M178 437l2 6M274 469v2M478 440l3 2M996 816v5M360 1130v10M601 1265h1M346 1352l-2 10M486 1315l7 8"/>
<path d="M374 325q5-13 25-5l-1 34q-18-9-24-29M242 199q15-3 20 19 7 26-11 26l-10-18 14-7q-4-7-13-20M824 152q6-3 7 2l4 30q-4 8-10 3zM648 88q8-13 12-2-3 18-11 44-6 7-10 1 7-19 9-43M557 524l8 5q-2 15-10 40l-5 22-32-3-2-4 28-11q8-24 11-49M151 626l30-27q12 8 8 22-24 16-34 14zM375 957q5-5 8 1l4 31q-2 8-15 12-20 19-43 20-5-8 15-12 12-17 30-20zM690 1162q7-1 6 10l3 50q-8 26-26 21-7-5 3-6 9-8 14-16zM1121 720q12 13 30 14 3 13-8 12-18-4-22-26M1352 683q9-1 5 41-7 5-11 0zM1251 936q-5-30 11-34l19 28-9 32h-6l3-50q-15-9-18 24M1198 1228q9-4 14 15-1 15-11 41-21 3-36 1 5-4 32-13 12-34 1-44M927 1305l27 2 12-27q5 15-7 34-27 5-32 1zM1377 1305l26-20q7 24-26 27zM1056 561l11-25 2 26zM1522 387l10-25 2 25zM1563 205l5-5v26q-7-6-5-21M1554 1388q8-3 8 12 0 20-9 28zM137 1470q32 22 35 54l-18 2q-13-20-17-56M316 1520q10-20 16-4l6 25zM24 1400l30-24q20-3 20 22-6 40-2 70l-9 45-28 14-1 19q5 18-5 19H8q3-26 12-43l30-14q15-40 5-70l-24 5zM0 1428l10 20 4 19q-14-11-14-28M1143 1175l10-1 8 12-15 1z"/>
<path class="hole" d="M152 1495q10 8 5 18l-7 2z"/>
</g>
<!-- below the card -->
<g class="narrow" transform="translate(720 1400) scale(.9184 .3333)">
<path class="s2" d="M2 178v6M1 275v14M3 370v16M7 395h0M72 418h0M44 466h0M60 485h0M69 530v4M112 480v4M130 459v6M194 442h0M214 452v10M250 462h0M272 441v4M331 432v6M437 485h0M93 523v8M63 574h0M29 550h0M262 554h0M311 595v5M343 575v16M384 590v8M442 584v5M530 540v14M588 548h0M649 464v18M661 494v4M751 434v4M829 467h0M687 562v16M701 554h0M799 552h0M793 582v18M957 514h0M963 509v4M900 422h0M995 422v5M1064 422v16M1074 488v6M1121 504v6M1126 562v14M1166 492v4M1150 478v14M1080 460l6 36M1040 552v14M1028 578v14M1067 567v4M1122 425v14M1099 424v4M1343 422v28M1415 470h0M1441 492v8M1362 520v12M1386 552v5M1399 582h0M1428 578h0M1422 595h0M1450 594h0M1269 422v6M1456 422h0M1503 400l4 36M1558 346v8M1494 598h0M305 430v30M325 496v20M159 516v20M1300 528v14M1311 568v28M1549 500v20M77 590v8"/>
<path d="M76 420h14q6 16 3 70-6 10-10-4l4-20q-3-20-9-4zM608 418h20l2 36-8 36q-6 6-9-6zM1188 475q15-20 18-44 8-20 11 5l1 34 17 65-9 65h-27q-21-35-20-85 3-32 9-40"/>
<path class="hole" d="M1199 484q6-15 5 8l3 34q6 0 6 12-7 16-12 4z"/>
</g>
</svg>
<main class="page">
<form class="search"><input class="search-input" type="text" placeholder="Enter a location" aria-label="Location"></form>
<section class="card">
<h1 class="city">- -</h1>
<p class="date">-</p>
<div class="temp"><span>-</span><span class="unit">-</span></div>
<p class="range">--<span class="slash">/</span>--</p>
<p class="condition">---</p>
</section>
</main>
</body>
</html>
```
FILE: styles.css
```css
* { box-sizing: border-box; }
body { margin: 0; background: #6d73f9; font-family: Roboto, "Noto Sans", sans-serif; overflow: hidden; }
.speckle { position: absolute; top: 0; left: 0; width: 2880px; height: 1600px; z-index: -1; fill: #000; stroke: none; }
.s1, .s2, .s3, .s4 { fill: none; stroke: #000; stroke-linecap: round; stroke-linejoin: round; }
.s1 { stroke-width: 4.5; }
.s2 { stroke-width: 9; }
.s3 { stroke-width: 14; }
.s4 { stroke-width: 21; }
.narrow .s1 { stroke-width: 2.5; }
.narrow .s2 { stroke-width: 5.5; }
.narrow .s3 { stroke-width: 9; }
.narrow .s4 { stroke-width: 13; }
.hole { fill: #6d73f9; }
.page { height: 1600px; padding-top: 94px; display: flex; flex-direction: column; align-items: center; gap: 90px; }
.search { width: 640px; height: 100px; }
.search-input {
  width: 100%; height: 100%; padding: 2px 20px 0; border: 0; border-bottom: 6px solid #6787f7; border-radius: 50px;
  background: rgba(233, 229, 218, .49); background-clip: padding-box;
  box-shadow: 10px 10px 20px rgba(0, 0, 0, .45), -10px -10px 30px rgba(128, 128, 128, .2);
  font: 400 40.5px Roboto, sans-serif; text-align: center; outline: 0;
}
.search-input::placeholder { color: #6c6a8c; opacity: 1; }
.card {
  width: 1440px; height: 1256px; padding-top: 45px; border-bottom: 16px solid #6787f7; border-radius: 120px;
  background: rgba(95, 149, 249, .95); background-clip: padding-box;
  box-shadow: 10px 10px 30px rgba(0, 0, 0, .5), -10px -10px 30px rgba(128, 128, 128, .3);
  display: flex; flex-direction: column; align-items: center; color: #333;
}
.city, .date, .range, .condition { margin: 0; font-weight: 500; text-shadow: -2px -3px 4px #eee, 3px 3px 6px rgba(51, 51, 51, .6); }
.city { font-size: 72px; line-height: 100px; letter-spacing: 1.5px; }
.date { font-size: 76px; line-height: 100px; margin-top: 14px; padding-left: 8px; font-style: italic; color: #5fbff9; }
.temp { height: 320px; margin-top: 50px; display: flex; gap: 80px; font-size: 272px; line-height: 320px; color: #6787f7; text-shadow: -3px -4px 6px rgba(238, 238, 238, .8), 5px 6px 9px #333; }
.range { font-size: 60px; line-height: 80px; margin-top: 49px; padding-left: 15px; font-style: italic; letter-spacing: 15px; color: #5fbff9; }
.slash { font-style: normal; }
.condition { font-size: 40px; line-height: 60px; margin-top: 18px; padding-left: 12px; letter-spacing: 12px; }
```
